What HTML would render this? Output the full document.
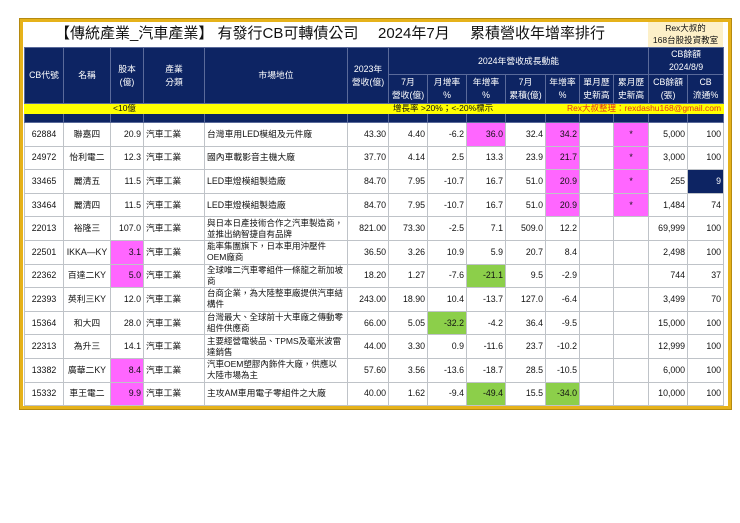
<!DOCTYPE html>
<html><head><meta charset="utf-8"><style>
body{margin:0;background:#fff;width:740px;height:523px;position:relative;overflow:hidden;font-family:"Liberation Sans","Noto Sans CJK TC",sans-serif;}
.frame{position:absolute;left:20px;top:19px;width:705px;height:384px;border:3px solid #e6b21a;box-shadow:0 0 0 1px #b58a10;}
.tt{position:absolute;top:24px;font-size:15px;line-height:20px;color:#111;white-space:nowrap}
.rex{position:absolute;left:648px;top:22px;width:75px;height:25px;background:#fdf0c8;font-size:8.5px;line-height:12px;text-align:center;color:#111}
table{position:absolute;left:24px;top:47px;border-collapse:collapse;table-layout:fixed;width:699px;}
td{border:1px solid #bfc3c8;padding:0 2px;font-size:8.8px;color:#111;overflow:hidden;white-space:nowrap;height:22.6px;line-height:11px}
.h td{background:#0d2463;color:#fff;text-align:center;border-color:#5a6a9a;font-size:8.8px;line-height:13px;white-space:normal;}
.y td{background:#ffff00;height:9px;font-size:8.5px;line-height:9px;border-color:#ffff00;padding-top:0;padding-bottom:0}
.n td{background:#0d2463;height:8px;line-height:8px;border-color:#5a6a9a;}
.r{text-align:right}.c{text-align:center}
.m{background:#ff66ff}.g{background:#8ccf4a}
.w{white-space:normal;line-height:11px;font-size:8.5px}
.nv{background:#0d2463;color:#fff}
</style></head><body>
<div class="frame"></div>
<div class="tt" style="left:55px">【傳統產業_汽車產業】 有發行CB可轉債公司</div>
<div class="tt" style="left:378px">2024年7月</div>
<div class="tt" style="left:470px">累積營收年增率排行</div>
<div class="rex">Rex大叔的<br>168台股投資教室</div>
<table>
<colgroup><col style="width:39px"><col style="width:47px"><col style="width:33px"><col style="width:61px"><col style="width:143px"><col style="width:41px"><col style="width:39px"><col style="width:39px"><col style="width:39px"><col style="width:40px"><col style="width:34px"><col style="width:34px"><col style="width:35px"><col style="width:39px"><col style="width:36px"></colgroup>
<tr class="h"><td rowspan="2">CB代號</td><td rowspan="2">名稱</td><td rowspan="2">股本<br>(億)</td><td rowspan="2">產業<br>分類</td><td rowspan="2">市場地位</td><td rowspan="2">2023年<br>營收(億)</td><td colspan="7" style="height:22px">2024年營收成長動能</td><td colspan="2">CB餘額<br>2024/8/9</td></tr>
<tr class="h"><td style="height:28px">7月<br>營收(億)</td><td>月增率<br>%</td><td>年增率<br>%</td><td>7月<br>累積(億)</td><td>年增率<br>%</td><td>單月歷<br>史新高</td><td>累月歷<br>史新高</td><td>CB餘額<br>(張)</td><td>CB<br>流通%</td></tr>
<tr class="y"><td></td><td></td><td colspan="3" style="padding-left:2px">&lt;10億</td><td></td><td colspan="4" style="padding-left:4px">增長率 &gt;20%；&lt;-20%標示</td><td colspan="5" style="color:#e0301e;text-align:right">Rex大叔整理：rexdashu168@gmail.com</td></tr>
<tr class="n"><td></td><td></td><td></td><td></td><td></td><td></td><td></td><td></td><td></td><td></td><td></td><td></td><td></td><td></td><td></td></tr>
<tr><td class="c">62884</td><td class="c">聯嘉四</td><td class="r">20.9</td><td>汽車工業</td><td>台灣車用LED模組及元件廠</td><td class="r">43.30</td><td class="r">4.40</td><td class="r">-6.2</td><td class="r m">36.0</td><td class="r">32.4</td><td class="r m">34.2</td><td></td><td class="c m">*</td><td class="r">5,000</td><td class="r">100</td></tr>
<tr><td class="c">24972</td><td class="c">怡利電二</td><td class="r">12.3</td><td>汽車工業</td><td>國內車載影音主機大廠</td><td class="r">37.70</td><td class="r">4.14</td><td class="r">2.5</td><td class="r">13.3</td><td class="r">23.9</td><td class="r m">21.7</td><td></td><td class="c m">*</td><td class="r">3,000</td><td class="r">100</td></tr>
<tr><td class="c">33465</td><td class="c">麗清五</td><td class="r">11.5</td><td>汽車工業</td><td>LED車燈模組製造廠</td><td class="r">84.70</td><td class="r">7.95</td><td class="r">-10.7</td><td class="r">16.7</td><td class="r">51.0</td><td class="r m">20.9</td><td></td><td class="c m">*</td><td class="r">255</td><td class="r nv">9</td></tr>
<tr><td class="c">33464</td><td class="c">麗清四</td><td class="r">11.5</td><td>汽車工業</td><td>LED車燈模組製造廠</td><td class="r">84.70</td><td class="r">7.95</td><td class="r">-10.7</td><td class="r">16.7</td><td class="r">51.0</td><td class="r m">20.9</td><td></td><td class="c m">*</td><td class="r">1,484</td><td class="r">74</td></tr>
<tr><td class="c">22013</td><td class="c">裕隆三</td><td class="r">107.0</td><td>汽車工業</td><td class="w">與日本日產技術合作之汽車製造商，並推出納智捷自有品牌</td><td class="r">821.00</td><td class="r">73.30</td><td class="r">-2.5</td><td class="r">7.1</td><td class="r">509.0</td><td class="r">12.2</td><td></td><td></td><td class="r">69,999</td><td class="r">100</td></tr>
<tr><td class="c">22501</td><td class="c">IKKA—KY</td><td class="r m">3.1</td><td>汽車工業</td><td class="w">能率集團旗下，日本車用沖壓件OEM廠商</td><td class="r">36.50</td><td class="r">3.26</td><td class="r">10.9</td><td class="r">5.9</td><td class="r">20.7</td><td class="r">8.4</td><td></td><td></td><td class="r">2,498</td><td class="r">100</td></tr>
<tr><td class="c">22362</td><td class="c">百達二KY</td><td class="r m">5.0</td><td>汽車工業</td><td class="w">全球唯二汽車零組件一條龍之新加坡商</td><td class="r">18.20</td><td class="r">1.27</td><td class="r">-7.6</td><td class="r g">-21.1</td><td class="r">9.5</td><td class="r">-2.9</td><td></td><td></td><td class="r">744</td><td class="r">37</td></tr>
<tr><td class="c">22393</td><td class="c">英利三KY</td><td class="r">12.0</td><td>汽車工業</td><td class="w">台商企業，為大陸整車廠提供汽車結構件</td><td class="r">243.00</td><td class="r">18.90</td><td class="r">10.4</td><td class="r">-13.7</td><td class="r">127.0</td><td class="r">-6.4</td><td></td><td></td><td class="r">3,499</td><td class="r">70</td></tr>
<tr><td class="c">15364</td><td class="c">和大四</td><td class="r">28.0</td><td>汽車工業</td><td class="w">台灣最大、全球前十大車廠之傳動零組件供應商</td><td class="r">66.00</td><td class="r">5.05</td><td class="r g">-32.2</td><td class="r">-4.2</td><td class="r">36.4</td><td class="r">-9.5</td><td></td><td></td><td class="r">15,000</td><td class="r">100</td></tr>
<tr><td class="c">22313</td><td class="c">為升三</td><td class="r">14.1</td><td>汽車工業</td><td class="w">主要經營電裝品、TPMS及毫米波雷達銷售</td><td class="r">44.00</td><td class="r">3.30</td><td class="r">0.9</td><td class="r">-11.6</td><td class="r">23.7</td><td class="r">-10.2</td><td></td><td></td><td class="r">12,999</td><td class="r">100</td></tr>
<tr><td class="c">13382</td><td class="c">廣華二KY</td><td class="r m">8.4</td><td>汽車工業</td><td class="w">汽車OEM塑膠內飾件大廠，供應以大陸市場為主</td><td class="r">57.60</td><td class="r">3.56</td><td class="r">-13.6</td><td class="r">-18.7</td><td class="r">28.5</td><td class="r">-10.5</td><td></td><td></td><td class="r">6,000</td><td class="r">100</td></tr>
<tr><td class="c">15332</td><td class="c">車王電二</td><td class="r m">9.9</td><td>汽車工業</td><td>主攻AM車用電子零組件之大廠</td><td class="r">40.00</td><td class="r">1.62</td><td class="r">-9.4</td><td class="r g">-49.4</td><td class="r">15.5</td><td class="r g">-34.0</td><td></td><td></td><td class="r">10,000</td><td class="r">100</td></tr>
</table>
</body></html>
